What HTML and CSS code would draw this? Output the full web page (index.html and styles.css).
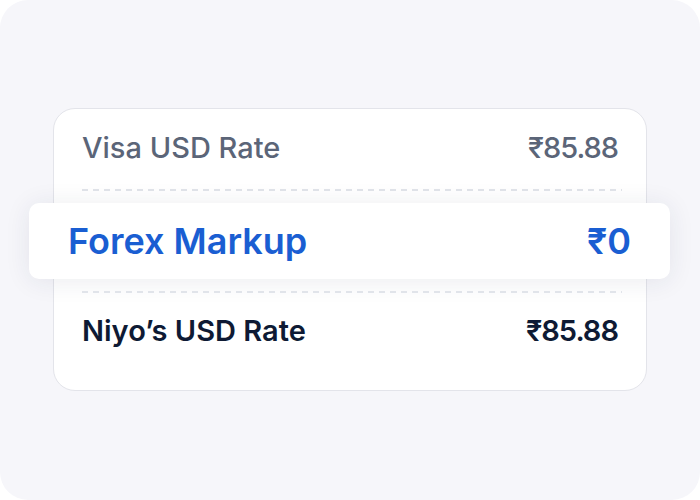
FILE: index.html
```html
<!DOCTYPE html>
<html>
<head>
<meta charset="utf-8">
<link rel="stylesheet" href="styles.css">
</head>
<body>
<div class="frame">
  <div class="card">
    <div class="row row-top">
      <span class="label muted">Visa USD Rate</span>
      <span class="value muted">₹85.88</span>
    </div>
    <div class="dash"></div>
    <div class="highlight">
      <span class="hl-label">Forex Markup</span>
      <span class="hl-value">₹0</span>
    </div>
    <div class="dash"></div>
    <div class="row row-bottom">
      <span class="label strong">Niyo’s USD Rate</span>
      <span class="value strong">₹85.88</span>
    </div>
  </div>
</div>
</body>
</html>
```
FILE: styles.css
```css
html, body {
  margin: 0;
  padding: 0;
  background: #ffffff;
}
body {
  font-family: Inter, "Noto Sans", sans-serif;
}
.frame {
  width: 700px;
  height: 500px;
  background: #f6f6fa;
  border-radius: 28px;
  box-sizing: border-box;
  padding-top: 108px;
  display: flex;
  flex-direction: column;
  align-items: center;
}
.card {
  width: 594px;
  box-sizing: border-box;
  background: #ffffff;
  border: 1px solid #e3e4ea;
  border-radius: 22px;
  padding: 0 28px;
  display: flex;
  flex-direction: column;
}
.row {
  display: flex;
  justify-content: space-between;
  align-items: center;
}
.row-top {
  height: 80px;
  box-sizing: border-box;
  padding-bottom: 3px;
}
.row-bottom {
  height: 74px;
  padding-bottom: 23px;
}
.dash {
  height: 2px;
  margin-right: -4px;
  background: repeating-linear-gradient(90deg, #e1e4ea 0 6px, transparent 6px 11px);
}
.dash + .highlight { margin-top: 12px; }
.highlight + .dash { margin-top: 12px; }
.label, .value {
  font-size: 29px;
}
.value {
  letter-spacing: -1px;
}
.muted {
  color: #5b6578;
  font-weight: 500;
}
.strong {
  color: #0e1a34;
  font-weight: 600;
}
.highlight {
  margin: 0 -52px 0 -53px;
  height: 76px;
  box-sizing: border-box;
  padding: 0 39px;
  background: #ffffff;
  border-radius: 10px;
  box-shadow: 0 2px 26px rgba(30, 40, 80, 0.09);
  display: flex;
  justify-content: space-between;
  align-items: center;
}
.hl-label, .hl-value {
  color: #1a5ed2;
  font-size: 36px;
  font-weight: 600;
}
```
